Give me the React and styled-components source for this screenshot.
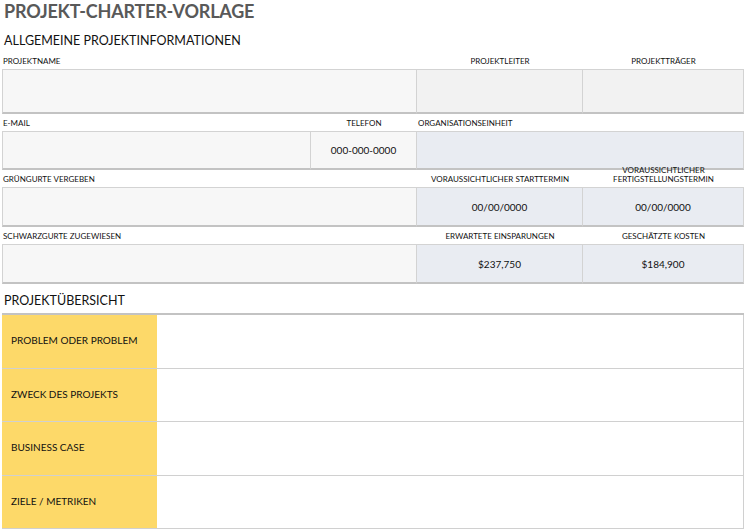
import React from "react";
import styled, { createGlobalStyle } from "styled-components";

const Global = createGlobalStyle`
  body { margin: 0; background: #fff; font-family: Lato, "Liberation Sans", sans-serif; color: #111; }
`;
const Page = styled.div`
  width: 746px; padding: 0 2px 0 2px; box-sizing: border-box;
`;
const Title = styled.h1`
  margin: 0; height: 22px; line-height: 22px; font-size: 18px; font-weight: 700; color: #595959;
  padding-left: 2px; letter-spacing: -0.2px;
`;
const Heading = styled.h2`
  margin: 0; font-weight: 400; font-size: 12.5px; color: #111; padding-left: 2px;
  height: ${p => p.$h}px; display: flex; align-items: flex-end; padding-bottom: ${p => p.$pb}px;
  box-sizing: border-box;
`;
const Block = styled.div`
  display: grid;
  grid-template-columns: ${p => p.$cols};
`;
const Label = styled.div`
  font-size: 8px; height: 17px; display: flex; align-items: flex-end; padding-bottom: 3px;
  box-sizing: border-box; line-height: 9px; text-transform: uppercase;
  justify-content: ${p => (p.$left ? "flex-start" : "center")};
  text-align: ${p => (p.$left ? "left" : "center")};
  padding-left: ${p => (p.$left ? "1px" : 0)};
`;
const Box = styled.div`
  height: ${p => p.$h || 45}px; box-sizing: border-box;
  background: ${p => p.$bg || "#f7f7f7"};
  border: 1px solid #d3d3d3; border-bottom: 2px solid #c3c3c3;
  border-left: ${p => (p.$first ? "1px solid #d3d3d3" : "none")};
  display: flex; align-items: center; justify-content: center;
  font-size: 10px;
`;
const Table = styled.div`
  margin-top: 3px; border-top: 2px solid #c3c3c3;
  display: grid; grid-template-columns: 155px 1fr;
`;
const Key = styled.div`
  background: #fdd969; height: 53.5px; box-sizing: border-box; padding-left: 9px;
  display: flex; align-items: center; font-size: 10px;
  border-bottom: 1px solid #d0d0d0; padding-bottom: 2px;
`;
const Val = styled.div`
  height: 53.5px; box-sizing: border-box; border-bottom: 1px solid #d0d0d0;
  border-right: 1px solid #d0d0d0;
`;

const blue = "#e9ecf2";

export default function App() {
  return (
    <Page>
      <Global />
      <Title>PROJEKT-CHARTER-VORLAGE</Title>
      <Heading $h={30} $pb={4}>ALLGEMEINE PROJEKTINFORMATIONEN</Heading>
      <Block $cols="415px 166px 161px">
        <Label $left>Projektname</Label>
        <Label>Projektleiter</Label>
        <Label>Projektträger</Label>
        <Box $first />
        <Box $bg="#f2f2f2" />
        <Box $bg="#f2f2f2" />
      </Block>
      <Block $cols="309px 106px 327px">
        <Label $left>E-Mail</Label>
        <Label>Telefon</Label>
        <Label $left>Organisationseinheit</Label>
        <Box $first $h={39} />
        <Box $h={39}>000-000-0000</Box>
        <Box $h={39} $bg={blue} />
      </Block>
      <Block $cols="415px 166px 161px">
        <Label $left>Grüngurte vergeben</Label>
        <Label>Voraussichtlicher Starttermin</Label>
        <Label>Voraussichtlicher<br />Fertigstellungstermin</Label>
        <Box $first $h={40} />
        <Box $h={40} $bg={blue}>00/00/0000</Box>
        <Box $h={40} $bg={blue}>00/00/0000</Box>
      </Block>
      <Block $cols="415px 166px 161px">
        <Label $left>Schwarzgurte zugewiesen</Label>
        <Label>Erwartete Einsparungen</Label>
        <Label>Geschätzte Kosten</Label>
        <Box $first $h={40} />
        <Box $h={40} $bg={blue}>$237,750</Box>
        <Box $h={40} $bg={blue}>$184,900</Box>
      </Block>
      <Heading $h={26} $pb={2}>PROJEKTÜBERSICHT</Heading>
      <Table>
        <Key>PROBLEM ODER PROBLEM</Key><Val />
        <Key>ZWECK DES PROJEKTS</Key><Val />
        <Key>BUSINESS CASE</Key><Val />
        <Key>ZIELE / METRIKEN</Key><Val />
      </Table>
    </Page>
  );
}
